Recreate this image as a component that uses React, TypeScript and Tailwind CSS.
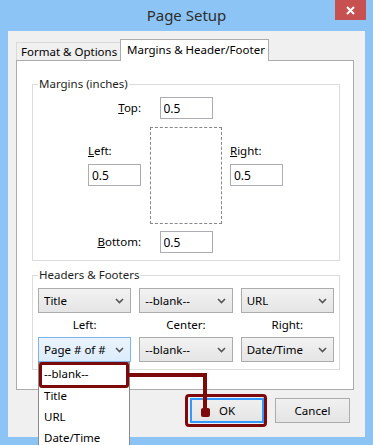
import React from 'react';

const Chevron = () => (
  <svg width="9" height="6" viewBox="0 0 9 6" className="shrink-0">
    <polyline points="1,1 4.5,4.5 8,1" fill="none" stroke="#555" strokeWidth="1.6" />
  </svg>
);

const Dropdown = ({ value, focused = false }: { value: string; focused?: boolean }) => (
  <div
    className={`h-[25px] flex items-center justify-between pl-[5px] pr-[6px] border bg-gradient-to-b ${
      focused ? 'border-[#7eb4ea] from-[#ecf4fc] to-[#dcecfc]' : 'border-[#acacac] from-[#f2f2f2] to-[#e5e5e5]'
    }`}
  >
    <span className="leading-[16px] whitespace-nowrap">{value}</span>
    <Chevron />
  </div>
);

const Field = ({ value }: { value: string }) => (
  <input
    readOnly
    value={value}
    className="w-[53px] h-[22px] border border-[#abadb3] bg-white px-[3px] outline-none text-[12px]"
  />
);

export default function App() {
  return (
    <div className="relative w-[373px] h-[445px] overflow-hidden bg-[#8cc5f5] font-['Noto_Sans',sans-serif] text-[11.5px] text-black">
      {/* title bar */}
      <div className="relative h-[31px] flex justify-center pt-[5px]">
        <span className="text-[15px] leading-[20px] text-[#2e2e2e]">Page Setup</span>
        <div className="absolute top-0 right-[7px] w-[31px] h-[20px] bg-[#c75050] flex items-center justify-center">
          <svg width="9" height="9" viewBox="0 0 9 9">
            <path d="M1 1L8 8M8 1L1 8" stroke="#fff" strokeWidth="2" />
          </svg>
        </div>
      </div>

      {/* dialog body */}
      <div className="mx-[8px] h-[406px] bg-[#f0f0f0] px-[8px] pt-[8px]">
        {/* tabs */}
        <div className="flex items-end h-[21px]">
          <div className="w-[105px] h-[18px] border border-b-0 border-[#d9d9d9] bg-[#f0f0f0] pl-[4px] leading-[17px] whitespace-nowrap">
            Format &amp; Options
          </div>
          <div className="relative z-10 -ml-px -mb-px w-[149px] h-[22px] border border-b-0 border-[#acacac] bg-white pl-[6px] leading-[19px] whitespace-nowrap">
            Margins &amp; Header/Footer
          </div>
        </div>

        {/* tab page */}
        <div className="w-[338px] h-[330px] border border-[#acacac] bg-white pt-[15px]">
          <fieldset className="ml-[15px] w-[308px] border border-[#dcdcdc] pb-[7px] pt-[5px]">
            <legend className="ml-[5px] px-[1px] leading-[16px] text-[#1e1e1e]">Margins (inches)</legend>
            <div className="grid grid-cols-[62px_72px_auto] pl-[55px]">
              <div className="text-right pr-[9px] leading-[22px]">
                <u>T</u>op:
              </div>
              <div className="flex justify-center">
                <Field value="0.5" />
              </div>
              <div />

              <div className="mt-[8px] pt-[16px]">
                <div className="leading-[16px] mb-[5px]">
                  <u>L</u>eft:
                </div>
                <Field value="0.5" />
              </div>
              <div className="mt-[8px] h-[97px] border border-dashed border-[#888]" />
              <div className="mt-[8px] pt-[16px] pl-[8px]">
                <div className="leading-[16px] mb-[5px]">
                  <u>R</u>ight:
                </div>
                <Field value="0.5" />
              </div>

              <div className="mt-[7px] text-right pr-[9px] leading-[22px]">
                <u>B</u>ottom:
              </div>
              <div className="mt-[7px] flex justify-center">
                <Field value="0.5" />
              </div>
              <div />
            </div>
          </fieldset>

          <fieldset className="mt-[6px] ml-[15px] w-[308px] border border-[#dcdcdc] px-[5px] pt-[5px] pb-[7px]">
            <legend className="px-[1px] leading-[16px] text-[#1e1e1e]">Headers &amp; Footers</legend>
            <div className="grid grid-cols-3 gap-x-[8px]">
              <Dropdown value="Title" />
              <Dropdown value="--blank--" />
              <Dropdown value="URL" />
              <div className="h-[24px] flex items-center justify-center">Left:</div>
              <div className="h-[24px] flex items-center justify-center">Center:</div>
              <div className="h-[24px] flex items-center justify-center">Right:</div>
              <Dropdown value="Page # of #" focused />
              <Dropdown value="--blank--" />
              <Dropdown value="Date/Time" />
            </div>
          </fieldset>
        </div>

        {/* buttons */}
        <div className="mt-[8px] flex justify-end gap-[11px] pr-[7px]">
          <div className="w-[74px] h-[25px] border-2 border-[#3399ff] bg-gradient-to-b from-[#f0f0f0] to-[#e5e5e5] flex items-center justify-center">
            OK
          </div>
          <div className="w-[75px] h-[25px] border border-[#acacac] bg-gradient-to-b from-[#f0f0f0] to-[#e5e5e5] flex items-center justify-center">
            Cancel
          </div>
        </div>
      </div>

      {/* open dropdown list */}
      <div className="absolute left-[38px] top-[362px] w-[92px] h-[90px] border border-[#8c8c8c] bg-white">
        <div className="h-[22px] pl-[5px] leading-[22px]">--blank--</div>
        <div className="h-[21px] pl-[5px] leading-[21px]">Title</div>
        <div className="h-[21px] pl-[5px] leading-[21px]">URL</div>
        <div className="h-[21px] pl-[5px] leading-[21px]">Date/Time</div>
      </div>

      {/* annotation */}
      <div className="absolute left-[39px] top-[362px] w-[90px] h-[26px] border-[3px] border-[#7d0a0a] rounded-[3px]" />
      <div className="absolute left-[129px] top-[373px] w-[78px] h-[4px] bg-[#7d0a0a]" />
      <div className="absolute left-[203px] top-[373px] w-[4px] h-[40px] bg-[#7d0a0a]" />
      <div className="absolute left-[201px] top-[408px] w-[9px] h-[9px] rounded-[2px] bg-[#7d0a0a]" />
      <div className="absolute left-[185px] top-[394px] w-[82px] h-[33px] border-[3px] border-[#7d0a0a] rounded-[4px]" />
    </div>
  );
}
